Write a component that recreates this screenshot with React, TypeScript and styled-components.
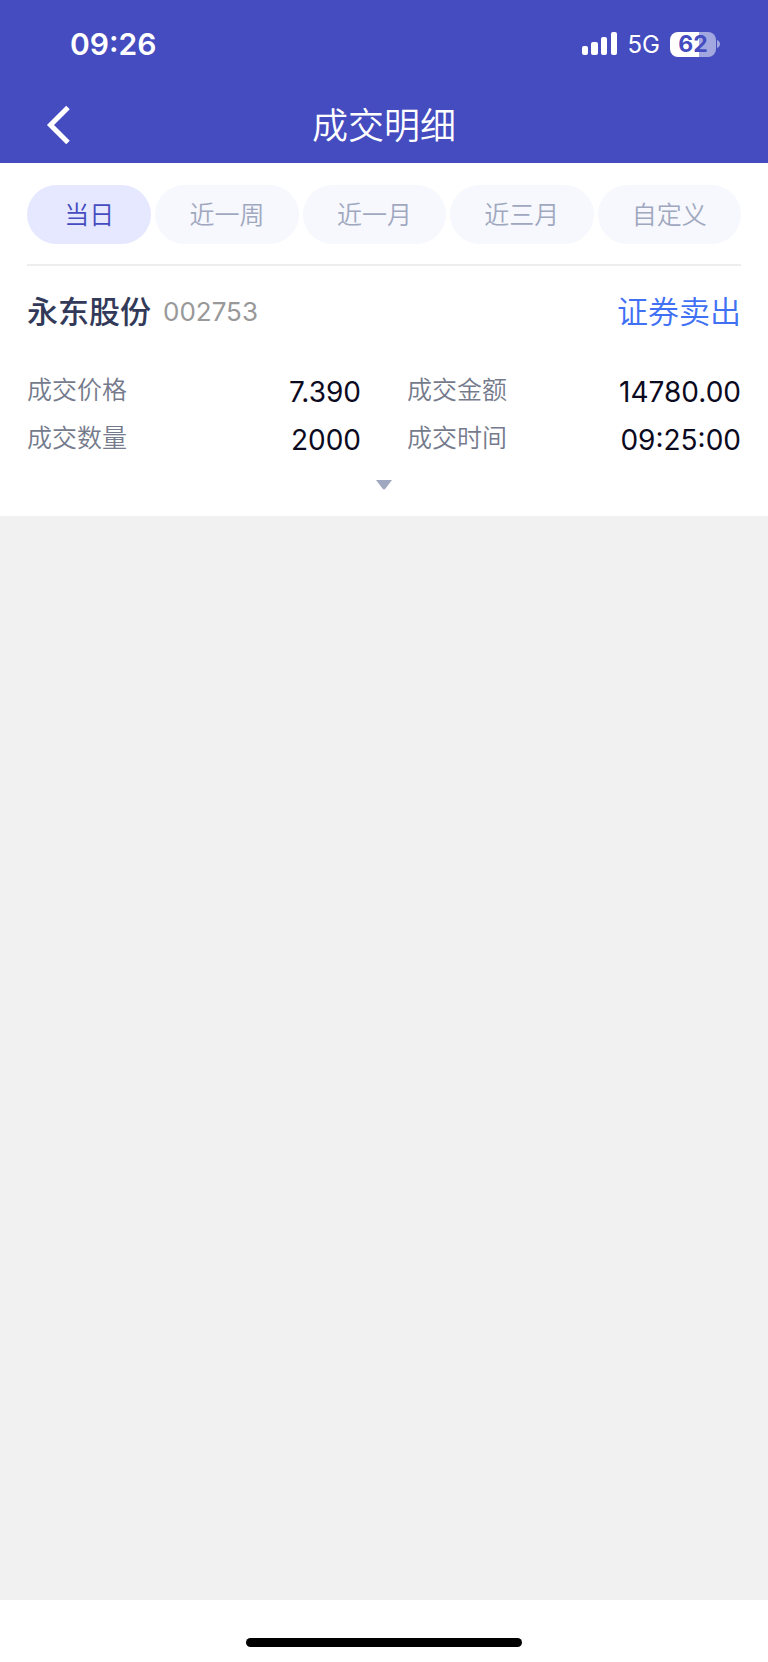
import React, { useState } from 'react';
import styled, { createGlobalStyle } from 'styled-components';

const GlobalStyle = createGlobalStyle`
  *, *::before, *::after { box-sizing: border-box; }
  body {
    margin: 0;
    background: #ffffff;
    font-family: Inter, "Noto Sans CJK SC", sans-serif;
  }
  button { border: 0; padding: 0; margin: 0; background: none; font: inherit; cursor: pointer; }
`;

const Screen = styled.div`
  min-height: 100vh;
  display: flex;
  flex-direction: column;
  background: #f1f1f1;
`;

const Header = styled.header`
  background: #444cbf;
  color: #ffffff;
`;

const StatusBar = styled.div`
  display: flex;
  align-items: center;
  justify-content: space-between;
  height: 88px;
  padding: 0 48px 0 70px;
`;

const Clock = styled.time`
  font-size: 30px;
  line-height: 36px;
  font-weight: 600;
`;

const StatusIcons = styled.div`
  display: flex;
  align-items: center;
  gap: 10px;
`;

const Network = styled.span`
  padding-top: 2px;
  font-size: 24px;
  line-height: 30px;
`;

const Battery = styled.div`
  display: flex;
  align-items: center;
  gap: 1px;
`;

const BatteryBody = styled.div`
  width: 46px;
  height: 25px;
  border-radius: 8px;
  background: linear-gradient(to right, #ffffff 62%, #a3a7e0 62%);
  color: #444cbf;
  font-size: 23px;
  line-height: 25px;
  font-weight: 700;
  text-align: center;
`;

const NavBar = styled.nav`
  display: grid;
  grid-template-columns: 72px 1fr 72px;
  align-items: center;
  height: 75px;
`;

const BackButton = styled.button`
  display: flex;
  justify-content: flex-end;
  padding-bottom: 2px;
  color: inherit;
`;

const Title = styled.h1`
  margin: 0;
  font-size: 36px;
  line-height: 48px;
  font-weight: 350;
  text-align: center;
`;

const Panel = styled.main`
  padding: 22px 27px 16px;
  background: #ffffff;
`;

const Tabs = styled.div`
  display: grid;
  grid-template-columns: 124fr repeat(4, 143fr);
  gap: 4px;
  padding-bottom: 20px;
  border-bottom: 2px solid #eeeeef;
`;

const Tab = styled.button<{ $active: boolean }>`
  height: 59px;
  border-radius: 30px;
  background: ${({ $active }) => ($active ? '#e5e8ff' : '#f7f8fd')};
  color: ${({ $active }) => ($active ? '#444cbf' : '#a0a8c0')};
  font-size: 25px;
  line-height: 36px;
  font-weight: 350;
`;

const StockRow = styled.div`
  display: flex;
  align-items: center;
  height: 92px;
`;

const StockName = styled.h2`
  margin: 0 12px 0 0;
  color: #333a59;
  font-size: 31px;
  line-height: 44px;
  font-weight: 500;
`;

const StockCode = styled.span`
  color: #999999;
  font-size: 26px;
  line-height: 36px;
`;

const Side = styled.span`
  margin-left: auto;
  color: #4070f4;
  font-size: 31px;
  line-height: 44px;
  font-weight: 350;
`;

const Details = styled.dl`
  display: grid;
  grid-template-columns: 1fr 1fr;
  column-gap: 46px;
  margin: 10px 0 0;
`;

const Detail = styled.div`
  display: flex;
  justify-content: space-between;
  height: 48px;
`;

const Label = styled.dt`
  color: #757b8c;
  font-size: 25px;
  line-height: 44px;
  font-weight: 350;
`;

const Value = styled.dd`
  margin: 0;
  color: #0c0a1e;
  font-size: 28px;
  line-height: 48px;
`;

const ExpandButton = styled.button`
  display: flex;
  align-items: flex-end;
  justify-content: center;
  width: 48px;
  height: 26px;
  margin: 0 auto 10px;
`;

const Footer = styled.footer`
  display: flex;
  justify-content: center;
  align-items: flex-end;
  height: 62px;
  margin-top: auto;
  padding-bottom: 15px;
  background: #ffffff;
`;

const HomeIndicator = styled.div`
  width: 36%;
  height: 9px;
  border-radius: 5px;
  background: #000000;
`;

const ranges = ['当日', '近一周', '近一月', '近三月', '自定义'];

const details = [
  ['成交价格', '7.390'],
  ['成交金额', '14780.00'],
  ['成交数量', '2000'],
  ['成交时间', '09:25:00'],
];

export default function App() {
  const [range, setRange] = useState(ranges[0]);
  return (
    <Screen>
      <GlobalStyle />
      <Header>
        <StatusBar>
          <Clock>09:26</Clock>
          <StatusIcons>
            <svg width="36" height="24" viewBox="0 0 36 24" fill="#ffffff" aria-hidden="true">
              <rect x="0" y="14" width="6" height="9" rx="2" />
              <rect x="9" y="10" width="7" height="13" rx="2" />
              <rect x="19" y="5" width="6" height="18" rx="2" />
              <rect x="29" y="0" width="6" height="23" rx="2" />
            </svg>
            <Network>5G</Network>
            <Battery>
              <BatteryBody>62</BatteryBody>
              <svg width="3" height="8" viewBox="0 0 3 8" aria-hidden="true">
                <path d="M0 0C4 1.500 4 6.500 0 8Z" fill="#a3a7e0" />
              </svg>
            </Battery>
          </StatusIcons>
        </StatusBar>
        <NavBar>
          <BackButton type="button" aria-label="返回">
            <svg width="26" height="40" viewBox="0 0 26 40" fill="none" aria-hidden="true">
              <path d="M22 2.500L4.500 20L22 37.500" stroke="#ffffff" strokeWidth="5" />
            </svg>
          </BackButton>
          <Title>成交明细</Title>
        </NavBar>
      </Header>
      <Panel>
        <Tabs>
          {ranges.map((name) => (
            <Tab
              key={name}
              type="button"
              $active={name === range}
              aria-pressed={name === range}
              onClick={() => setRange(name)}
            >
              {name}
            </Tab>
          ))}
        </Tabs>
        <StockRow>
          <StockName>永东股份</StockName>
          <StockCode>002753</StockCode>
          <Side>证券卖出</Side>
        </StockRow>
        <Details>
          {details.map(([label, value]) => (
            <Detail key={label}>
              <Label>{label}</Label>
              <Value>{value}</Value>
            </Detail>
          ))}
        </Details>
        <ExpandButton type="button" aria-label="展开">
          <svg width="16" height="10" viewBox="0 0 16 10" aria-hidden="true">
            <path d="M0 0H16L9.500 8.500Q8 10.500 6.500 8.500Z" fill="#a0a8c0" />
          </svg>
        </ExpandButton>
      </Panel>
      <Footer>
        <HomeIndicator />
      </Footer>
    </Screen>
  );
}
